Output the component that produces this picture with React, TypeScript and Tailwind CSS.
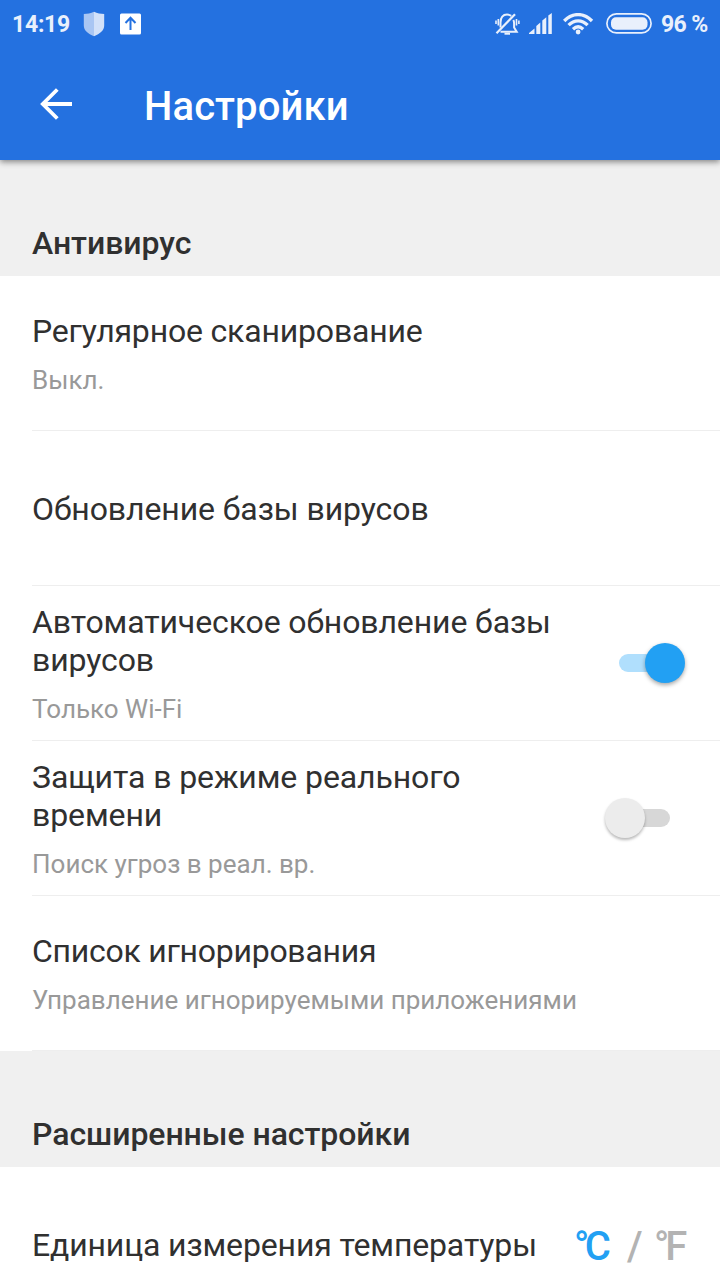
import React from "react";

const rows = [
  { title: "Регулярное сканирование", note: "Выкл.", spacing: "tracking-[-0.18px]" },
  { title: "Обновление базы вирусов", spacing: "tracking-[-0.09px] pt-px" },
  { title: "Автоматическое обновление базы вирусов", note: "Только Wi-Fi", spacing: "tracking-[-0.11px]", on: true },
  { title: "Защита в режиме реального времени", note: "Поиск угроз в реал. вр.", spacing: "tracking-[-0.1px]", on: false },
  { title: "Список игнорирования", note: "Управление игнорируемыми приложениями", spacing: "tracking-[-0.26px]" },
];

const Switch: React.FC<{ on: boolean }> = ({ on }) =>
  on ? (
    <div className="mr-[35px] flex w-[66px] shrink-0 items-center">
      <div className="-mr-[14px] h-[18px] w-10 shrink-0 rounded-full bg-[#b0dffd]" />
      <div className="z-10 h-10 w-10 shrink-0 rounded-full bg-[#22a0f3] shadow-[0_2px_4px_rgba(0,0,0,0.35)]" />
    </div>
  ) : (
    <div className="mr-[50px] flex w-[65px] shrink-0 items-center">
      <div className="z-10 h-10 w-10 shrink-0 rounded-full bg-[#ececec] shadow-[0_2px_3px_rgba(0,0,0,0.28)]" />
      <div className="-ml-[15px] h-[18px] w-10 shrink-0 rounded-full bg-[#d7d7d7]" />
    </div>
  );

const Section: React.FC<{ children: React.ReactNode }> = ({ children }) => (
  <h2 className="h-[116px] pt-[64px] pl-8 text-[32px] leading-[38px] font-medium tracking-[-0.06px]">{children}</h2>
);

const StatusBar: React.FC = () => (
  <div className="flex h-12 items-center pr-[12px] pl-[12px] text-[#e9f0fc]">
    <span className="w-[71px] pt-[3px] text-[23px] font-bold tracking-[-0.25px]">14:19</span>
    <svg className="h-[26px] w-[22px]" viewBox="0 0 22 26">
      <path d="M11 .8C8 2.6 4 3 .8 3v11.500C.8 19.500 5 22.800 11 25.200z" fill="#a9c6f3" />
      <path d="M11 .8C14 2.600 18 3 21.200 3v11.500C21.200 19.500 17 22.800 11 25.200z" fill="#d2e1f9" />
    </svg>
    <svg className="ml-[15px] h-[22px] w-[22px]" viewBox="0 0 22 22">
      <rect x="0" y=".5" width="21" height="21" rx="1.500" fill="#fff" />
      <path d="M10.500 17V5M5.500 10l5-5.200 5 5.200" fill="none" stroke="#2471e0" strokeWidth="2" />
    </svg>
    <div className="ml-auto flex items-center">
      <svg className="h-[22px] w-[25px]" viewBox="0 0 25 22" fill="none" stroke="currentColor" strokeWidth="2">
        <path d="M18.300 7c.6 1 .8 2.200.8 3.500v4l2.600 4.200H5.500M5.500 14.500V9.500C5.500 4.500 8 1.600 12 1.600c1.600 0 3 .4 4.200 1.300" />
        <path d="M1.500 20.300L20 1.200" strokeWidth="2.200" />
        <path d="M3.300 6v6.500M1 7.500v3.500M21.500 6v6.500M23.900 7.500v3.500" strokeWidth="1.600" />
        <path d="M9.500 20.700h5.500" strokeWidth="2" />
      </svg>
      <svg className="ml-[9px] h-[22px] w-[24px]" viewBox="0 0 24 22" fill="currentColor">
        <path d="M0 21v-1L5.500 15.500V21zM7.300 21v-8L11.300 9.500V21zM13.300 21V7.500L17.300 4.200V21zM19.300 21V2.500L22.800 0V21z" />
      </svg>
      <svg className="ml-[10px] h-[22px] w-[31px]" viewBox="0 0 31 22" fill="none" stroke="currentColor" strokeWidth="3.300">
        <path d="M1.200 8C9.400-.6 20.800-.6 29 8M5.600 12.200c5.600-5.800 13.400-5.800 19 0M10 16.200c3.200-3 7-3 10.200 0" />
        <circle cx="15.100" cy="19" r="2.400" fill="currentColor" stroke="none" />
      </svg>
      <svg className="ml-[12px] h-[22px] w-[46px]" viewBox="0 0 46 22">
        <rect x=".9" y=".9" width="44.200" height="19" rx="9.500" fill="none" stroke="currentColor" strokeWidth="1.700" />
        <rect x="5" y="4.200" width="36.500" height="12.500" rx="5" fill="currentColor" />
      </svg>
      <span className="ml-[9px] w-[47px] pt-[3px] text-[23px] font-bold tracking-[-0.6px] whitespace-nowrap">96 %</span>
    </div>
  </div>
);

const App: React.FC = () => {
  return (
    <div className="h-[1280px] w-[720px] overflow-hidden bg-[#f0f0f0] font-['Roboto',sans-serif] text-[#303030]">
      <header className="h-40 bg-[#2471e0] text-white shadow-[0_2px_6px_rgba(0,0,0,0.45)]">
        <StatusBar />
        <div className="flex h-28 items-center pl-10">
          <svg className="h-8 w-[33px]" viewBox="0 0 33 32" fill="none" stroke="#fff" strokeWidth="3.800">
            <path d="M32 16H3M17.300 1.500L2.800 16l14.500 14.500" />
          </svg>
          <h1 className="ml-[71px] pt-[5px] text-[40px] font-medium tracking-[0.1px]">Настройки</h1>
        </div>
      </header>
      <Section>Антивирус</Section>
      <main className="bg-white">
        {rows.map((row) => (
          <div key={row.title} className="ml-8 flex h-[155px] items-center border-b border-[#eeeeee]">
            <div className="w-[560px]">
              <p className={`w-[540px] text-[32px] leading-[38px] ${row.spacing}`}>{row.title}</p>
              {row.note && (
                <p className="mt-[15px] text-[26px] leading-[30px] text-[#999999]">{row.note}</p>
              )}
            </div>
            {row.on !== undefined && (
              <div className="ml-auto">
                <Switch on={row.on} />
              </div>
            )}
          </div>
        ))}
      </main>
      <Section>Расширенные настройки</Section>
      <div className="flex h-[155px] items-center bg-white pl-8">
        <p className="w-[542px] text-[32px] leading-[38px] tracking-[-0.14px]">Единица измерения температуры</p>
        <div className="flex pt-1 text-[40px] leading-[46px] font-medium text-[#b3b3b3]">
          <span className="w-[53px] text-[#22a0f3]">
            <span className="tracking-[-4.5px]">°</span>C
          </span>
          <span className="w-[27px]">/</span>
          <span>
            <span className="tracking-[-4px]">°</span>F
          </span>
        </div>
      </div>
    </div>
  );
};

export default App;
